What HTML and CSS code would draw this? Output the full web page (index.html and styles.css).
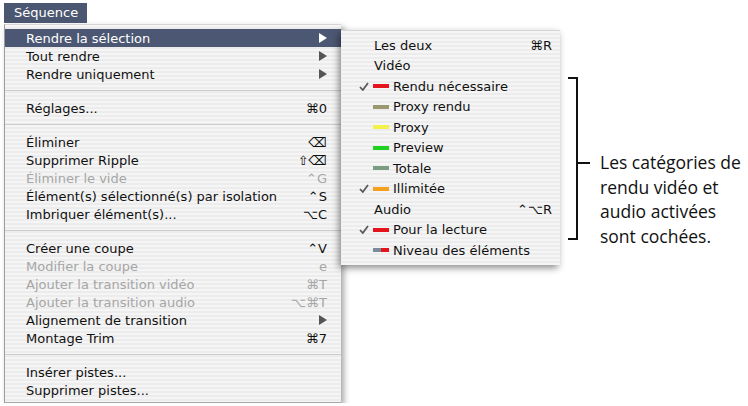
FILE: index.html
```html
<!DOCTYPE html>
<html lang="fr">

<head>
    <meta charset="UTF-8">
    <meta name="viewport" content="width=device-width, initial-scale=1.0">
    <title>Menu Séquence</title>
    <link rel="stylesheet" href="styles.css">
</head>

<body>

    <div class="stage">

        <div class="menu-col">
            <div class="menubar"><span class="menu-title">Séquence</span></div>

            <ul class="menu">
                <li class="item active"><span class="label">Rendre la sélection</span><span class="arrow"></span></li>
                <li class="item"><span class="label">Tout rendre</span><span class="arrow"></span></li>
                <li class="item"><span class="label">Rendre uniquement</span><span class="arrow"></span></li>
                <li class="sep"></li>
                <li class="item"><span class="label">Réglages...</span><span class="key">⌘0</span></li>
                <li class="sep"></li>
                <li class="item"><span class="label">Éliminer</span><span class="key">⌫</span></li>
                <li class="item"><span class="label">Supprimer Ripple</span><span class="key">⇧⌫</span></li>
                <li class="item disabled"><span class="label">Éliminer le vide</span><span class="key">⌃G</span></li>
                <li class="item"><span class="label">Élément(s) sélectionné(s) par isolation</span><span class="key">⌃S</span></li>
                <li class="item"><span class="label">Imbriquer élément(s)...</span><span class="key">⌥C</span></li>
                <li class="sep"></li>
                <li class="item"><span class="label">Créer une coupe</span><span class="key">⌃V</span></li>
                <li class="item disabled"><span class="label">Modifier la coupe</span><span class="key">e</span></li>
                <li class="item disabled"><span class="label">Ajouter la transition vidéo</span><span class="key">⌘T</span></li>
                <li class="item disabled"><span class="label">Ajouter la transition audio</span><span class="key">⌥⌘T</span></li>
                <li class="item"><span class="label">Alignement de transition</span><span class="arrow"></span></li>
                <li class="item"><span class="label">Montage Trim</span><span class="key">⌘7</span></li>
                <li class="sep"></li>
                <li class="item"><span class="label">Insérer pistes...</span></li>
                <li class="item"><span class="label">Supprimer pistes...</span></li>
            </ul>
        </div>

        <ul class="submenu">
            <li class="sub-item plain"><span class="label">Les deux</span><span class="key">⌘R</span></li>
            <li class="sub-item plain"><span class="label">Vidéo</span></li>
            <li class="sub-item">
                <span class="check"><svg width="10" height="9" viewBox="0 0 10 9"><path d="M1 5 L3.8 8 L9 1" fill="none" stroke="#5a5a5a" stroke-width="1.8"/></svg></span>
                <span class="swatch red"></span><span class="label">Rendu nécessaire</span>
            </li>
            <li class="sub-item"><span class="check"></span><span class="swatch olive"></span><span class="label">Proxy rendu</span></li>
            <li class="sub-item"><span class="check"></span><span class="swatch yellow"></span><span class="label">Proxy</span></li>
            <li class="sub-item"><span class="check"></span><span class="swatch green"></span><span class="label">Preview</span></li>
            <li class="sub-item"><span class="check"></span><span class="swatch sage"></span><span class="label">Totale</span></li>
            <li class="sub-item">
                <span class="check"><svg width="10" height="9" viewBox="0 0 10 9"><path d="M1 5 L3.8 8 L9 1" fill="none" stroke="#5a5a5a" stroke-width="1.8"/></svg></span>
                <span class="swatch orange"></span><span class="label">Illimitée</span>
            </li>
            <li class="sub-item plain"><span class="label">Audio</span><span class="key">⌃⌥R</span></li>
            <li class="sub-item">
                <span class="check"><svg width="10" height="9" viewBox="0 0 10 9"><path d="M1 5 L3.8 8 L9 1" fill="none" stroke="#5a5a5a" stroke-width="1.8"/></svg></span>
                <span class="swatch red"></span><span class="label">Pour la lecture</span>
            </li>
            <li class="sub-item"><span class="check"></span><span class="swatch split"></span><span class="label">Niveau des éléments</span></li>
        </ul>

        <div class="callout">
            <div class="bracket"></div>
            <p>Les catégories de<br>rendu vidéo et<br>audio activées<br>sont cochées.</p>
        </div>

    </div>

</body>

</html>
```

FILE: styles.css
```css
body {
    margin: 0;
    padding: 0;
    background-color: #fff;
    font-family: 'DejaVu Sans', sans-serif;
    font-size: 13px;
    color: #111;
}

ul {
    list-style: none;
    margin: 0;
    padding: 0;
}

.stage {
    display: flex;
    align-items: flex-start;
    padding: 3px 0 0 4px;
}

.menu-col {
    width: 337px;
}

.menubar {
    height: 20px;
}

.menu-title {
    display: inline-block;
    width: 73px;
    height: 20px;
    line-height: 20px;
    padding-left: 10px;
    background-color: #4b5770;
    color: #fff;
}

/* main menu */

.menu {
    margin-top: 1px;
    padding: 4px 0 3px 0;
    border-left: 1px solid #9c9c9c;
    border-top: 1px solid #d6d6d6;
    border-bottom: 1px solid #a8a8a8;
    background: repeating-linear-gradient(to bottom, #f5f5f5 0, #f5f5f5 2px, #ececec 2px, #ececec 4px);
    box-shadow: 3px 3px 6px rgba(0, 0, 0, 0.35);
}

.item {
    display: flex;
    align-items: center;
    height: 18px;
    padding: 0 14px 0 21px;
}

.item.active {
    background-color: #4c5873;
    color: #fff;
}

.item.disabled {
    color: #a6a6a6;
}

.key {
    margin-left: auto;
}

.arrow {
    margin-left: auto;
    width: 0;
    height: 0;
    border-left: 8px solid #555;
    border-top: 5px solid transparent;
    border-bottom: 5px solid transparent;
}

.item.active .arrow {
    border-left-color: #fff;
}

.sep {
    height: 16px;
    background: linear-gradient(to bottom, transparent 7px, #cdcdcd 7px, #cdcdcd 8px, transparent 8px);
}

/* submenu */

.submenu {
    position: relative;
    z-index: 1;
    width: 219px;
    margin-top: 27px;
    padding: 4px 0;
    border-top: 1px solid #d6d6d6;
    background: repeating-linear-gradient(to bottom, #f5f5f5 0, #f5f5f5 2px, #ececec 2px, #ececec 4px);
    box-shadow: -2px 3px 7px rgba(0, 0, 0, 0.45);
}

.sub-item {
    display: flex;
    align-items: center;
    height: 20.5px;
    padding: 0 8px 0 18px;
}

.sub-item.plain {
    padding-left: 33px;
}

.check {
    width: 10px;
    height: 9px;
    margin-right: 4px;
}

.check svg {
    display: block;
}

.swatch {
    width: 16px;
    height: 4px;
    margin-right: 4px;
}

.red { background-color: #e5141c; }
.olive { background-color: #9b9870; }
.yellow { background-color: #f4f24a; }
.green { background-color: #1fd21f; }
.sage { background-color: #7c9c82; }
.orange { background-color: #f6a11e; }
.split { background: linear-gradient(to right, #7a8c9c 50%, #e5141c 50%); }

/* callout */

.callout {
    display: flex;
    align-items: flex-start;
    margin: 74px 0 0 8px;
}

.bracket {
    position: relative;
    width: 8px;
    height: 159px;
    border: 2px solid #111;
    border-left: none;
}

.bracket::after {
    content: '';
    position: absolute;
    left: 8px;
    top: 83px;
    width: 14px;
    height: 2px;
    background-color: #111;
}

.callout p {
    margin: 73px 0 0 22px;
    font-family: 'Open Sans', sans-serif;
    font-size: 17.5px;
    line-height: 24.7px;
    color: #111;
    white-space: nowrap;
}
```
